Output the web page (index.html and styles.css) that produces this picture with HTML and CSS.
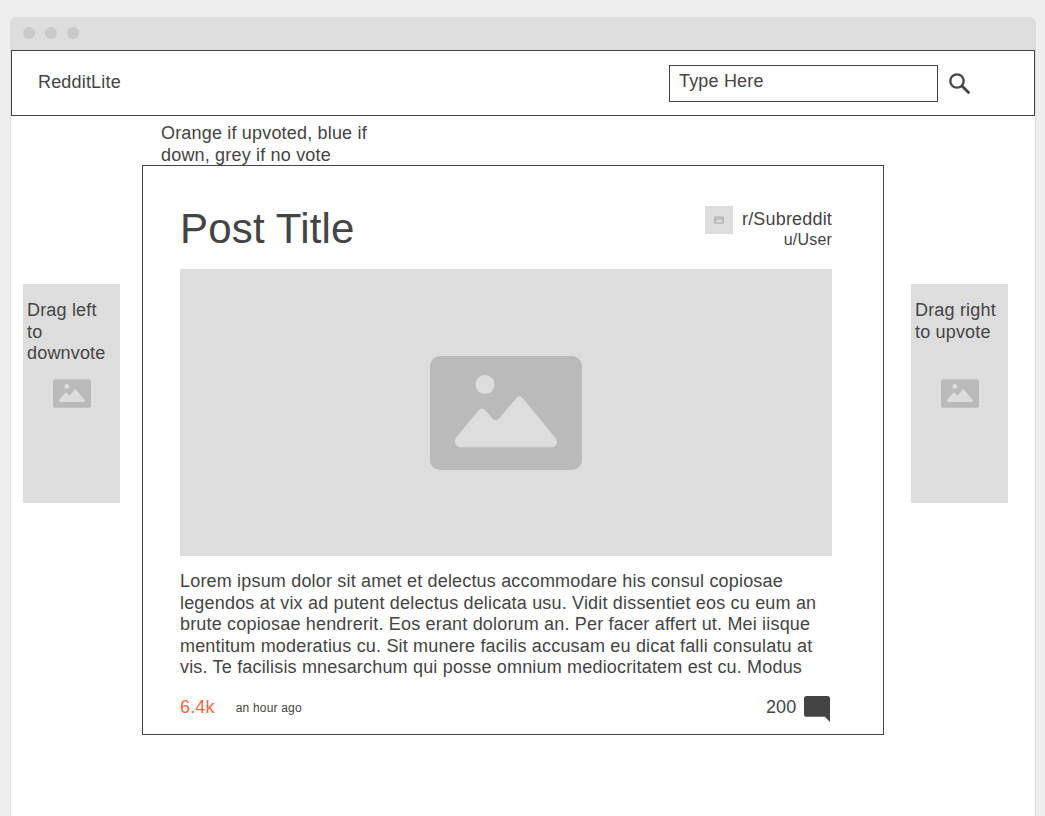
FILE: index.html
```html
<!DOCTYPE html>
<html lang="en">
<head>
<meta charset="utf-8">
<title>RedditLite</title>
<link rel="stylesheet" href="styles.css">
</head>
<body>
<svg class="defs" aria-hidden="true">
  <symbol id="picture" viewBox="0 0 152 114">
    <rect width="152" height="114" rx="10" fill="#bababa"/>
    <circle cx="55" cy="28.5" r="9.6" fill="#ddd"/>
    <path d="M26.500 81L48.500 54.500Q52 50.500 55.500 54.500L62 62Q65.500 66.500 69.500 62L86 42.500Q89.500 38.200 93 42.500L125.500 82C128.800 86.500 126.500 91.200 121 91.200H31C25.500 91.200 23.200 85.500 26.500 81Z" fill="#ddd"/>
  </symbol>
</svg>
<div class="window">
  <div class="titlebar"><i class="dot"></i><i class="dot"></i><i class="dot"></i></div>
  <div class="page">
    <header class="header">
      <div class="brand">RedditLite</div>
      <div class="search">Type Here</div>
      <svg class="search-icon" viewBox="0 0 22 22" fill="none" stroke="#444">
        <circle cx="8" cy="8" r="6.700" stroke-width="2.300"/>
        <path d="M12.700 12.700L20.300 20.300" stroke-width="2.800"/>
      </svg>
    </header>
    <main class="content">
      <aside class="vote vote-down">
        <p class="vote-text">Drag left<br>to<br>downvote</p>
        <svg class="vote-icon"><use href="#picture"/></svg>
      </aside>
      <div class="feed">
        <p class="note">Orange if upvoted, blue if<br>down, grey if no vote</p>
        <article class="card">
          <div class="card-head">
            <h1 class="title">Post Title</h1>
            <div class="avatar"><svg class="avatar-icon"><use href="#picture"/></svg></div>
            <div class="source">
              <div class="subreddit">r/Subreddit</div>
              <div class="user">u/User</div>
            </div>
          </div>
          <div class="media"><svg class="media-icon"><use href="#picture"/></svg></div>
          <p class="text">Lorem ipsum dolor sit amet et delectus accommodare his consul copiosae<br>legendos at vix ad putent delectus delicata usu. Vidit dissentiet eos cu eum an<br>brute copiosae hendrerit. Eos erant dolorum an. Per facer affert ut. Mei iisque<br>mentitum moderatius cu. Sit munere facilis accusam eu dicat falli consulatu at<br>vis. Te facilisis mnesarchum qui posse omnium mediocritatem est cu. Modus</p>
          <footer class="card-foot">
            <span class="score">6.4k</span>
            <span class="time">an hour ago</span>
            <span class="comments">200</span>
            <svg class="comment-icon" viewBox="0 0 26 26"><path d="M2.600 0H23.400Q26 0 26 2.600V26L20.800 20.800H2.600Q0 20.800 0 18.200V2.600Q0 0 2.600 0Z" fill="#444"/></svg>
          </footer>
        </article>
      </div>
      <aside class="vote vote-up">
        <p class="vote-text">Drag right<br>to upvote</p>
        <svg class="vote-icon"><use href="#picture"/></svg>
      </aside>
    </main>
  </div>
</div>
</body>
</html>
```

FILE: styles.css
```css
* { box-sizing: border-box; }
body {
  margin: 0;
  height: 816px;
  overflow: hidden;
  background: #eee;
  color: #444;
  font: 18px/21.6px "Liberation Sans", Arial, sans-serif;
  letter-spacing: 0.18px;
  white-space: nowrap;
}
p, h1 { margin: 0; font-weight: normal; }
svg { display: block; flex: none; }
.defs { width: 0; height: 0; position: absolute; }
.window { width: 1026px; margin: 17px 0 0 10px; }
.titlebar {
  display: flex;
  gap: 10px;
  height: 33px;
  padding: 10px 13px;
  background: #ddd;
  border-radius: 6px 6px 0 0;
}
.dot { width: 12px; height: 12px; border-radius: 50%; background: #c9c9c9; }
.page { height: 766px; background: #fff; border: solid #ddd; border-width: 0 1px; }
.header {
  display: flex;
  align-items: flex-start;
  height: 66px;
  padding: 14px 63px 0 26px;
  border: 1px solid #444;
}
.brand { padding-top: 7px; }
.search {
  width: 269px;
  height: 37px;
  margin-left: auto;
  padding: 5px 9px;
  border: 1px solid #444;
}
.search-icon { width: 22px; height: 22px; margin: 7.500px 0 0 11px; }
.content { display: flex; align-items: flex-start; padding-left: 12px; }
.vote {
  flex: none;
  display: flex;
  flex-direction: column;
  width: 97px;
  height: 219px;
  margin-top: 168px;
  padding: 16px 4px;
  background: #ddd;
}
.vote-text { height: 79px; }
.vote-icon { width: 38px; height: 29px; align-self: center; }
.feed { flex: none; width: 742px; margin: 0 27px 0 22px; }
.note { height: 49px; padding: 7px 0 0 19px; }
.card {
  height: 570px;
  padding: 0 51px 0 37px;
  border: 1px solid #444;
}
.card-head { display: flex; align-items: flex-start; height: 103px; padding-top: 40px; }
.title { flex: 1; padding-top: 1px; font-size: 42px; line-height: 44px; }
.avatar {
  display: grid;
  place-items: center;
  width: 28px;
  height: 28px;
  background: #ddd;
}
.avatar-icon { width: 10px; height: 8px; }
.source { margin-left: 9px; text-align: right; }
.subreddit { padding-top: 3px; }
.user { font-size: 16px; line-height: 18px; }
.media { display: grid; place-items: center; height: 287px; background: #ddd; }
.media-icon { width: 152px; height: 114px; }
.text { height: 139px; padding-top: 15px; }
.card-foot { display: flex; align-items: flex-start; }
.score { padding-top: 2px; color: #ff6347; }
.time { margin-left: 21px; padding-top: 3px; font-size: 12px; }
.comments { margin-left: auto; padding-top: 2px; }
.comment-icon { width: 26px; height: 26px; margin: 0.500px 2.500px 0 7px; }
```
